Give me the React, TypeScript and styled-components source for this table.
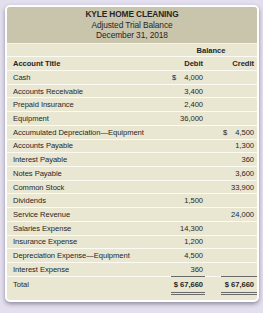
import styled, { createGlobalStyle } from "styled-components";

const GlobalStyle = createGlobalStyle`
  html, body {
    margin: 0;
    padding: 0;
    background: #e3dfee;
  }
  body {
    font-family: "Liberation Sans", Arial, sans-serif;
  }
`;

type Row = { title: string; debit?: string; credit?: string; dollar?: boolean };

const rows: Row[] = [
  { title: "Cash", debit: "4,000", dollar: true },
  { title: "Accounts Receivable", debit: "3,400" },
  { title: "Prepaid Insurance", debit: "2,400" },
  { title: "Equipment", debit: "36,000" },
  { title: "Accumulated Depreciation\u2014Equipment", credit: "4,500", dollar: true },
  { title: "Accounts Payable", credit: "1,300" },
  { title: "Interest Payable", credit: "360" },
  { title: "Notes Payable", credit: "3,600" },
  { title: "Common Stock", credit: "33,900" },
  { title: "Dividends", debit: "1,500" },
  { title: "Service Revenue", credit: "24,000" },
  { title: "Salaries Expense", debit: "14,300" },
  { title: "Insurance Expense", debit: "1,200" },
  { title: "Depreciation Expense\u2014Equipment", debit: "4,500" },
  { title: "Interest Expense", debit: "360" },
];

const Amount = ({ value, dollar }: { value?: string; dollar?: boolean }) => {
  if (!value) return null;
  if (!dollar) return <>{value}</>;
  return (
    <Dollar>
      <span>$</span>
      <span>{value}</span>
    </Dollar>
  );
};

const App = () => {
  return (
    <Page>
      <GlobalStyle />
      <Card>
        <Header>
          <Company>KYLE HOME CLEANING</Company>
          <SubTitle>Adjusted Trial Balance</SubTitle>
          <SubTitle>December 31, 2018</SubTitle>
        </Header>
        <Table>
          <BalanceRow>
            <span />
            <BalanceLabel>Balance</BalanceLabel>
          </BalanceRow>
          <HeadRow>
            <Cell>Account Title</Cell>
            <Num $head>Debit</Num>
            <Num $head $credit>Credit</Num>
          </HeadRow>
          {rows.map((r) => (
            <BodyRow key={r.title}>
              <Cell>{r.title}</Cell>
              <Num>{r.debit && <Amount value={r.debit} dollar={r.dollar} />}</Num>
              <Num $credit>
                {r.credit && <Amount value={r.credit} dollar={r.dollar} />}
              </Num>
            </BodyRow>
          ))}
          <TotalRow>
            <TotalCell>Total</TotalCell>
            <Num>
              <TotalAmount>$ 67,660</TotalAmount>
            </Num>
            <Num $credit>
              <TotalAmount $wide>$ 67,660</TotalAmount>
            </Num>
          </TotalRow>
          <Foot />
        </Table>
      </Card>
    </Page>
  );
};

export default App;

const Page = styled.div`
  width: 263px;
  height: 313px;
  box-sizing: border-box;
  padding: 5px 4px 0 5px;
`;

const Card = styled.div`
  width: 254px;
  border: 2.5px solid #ffffff;
  border-radius: 5px;
  box-sizing: border-box;
  background: #e9e6d1;
  box-shadow: 0 2px 4px rgba(60, 55, 80, 0.5);
  overflow: hidden;
`;

const Header = styled.div`
  background: #c9c4ac;
  height: 37px;
  display: flex;
  flex-direction: column;
  align-items: center;
  justify-content: center;
  color: #262626;
  border-bottom: 1px solid #f4f2e6;
  box-sizing: border-box;
`;

const Company = styled.div`
  font-size: 8.3px;
  font-weight: bold;
  line-height: 10.5px;
  letter-spacing: -0.1px;
`;

const SubTitle = styled.div`
  font-size: 8.4px;
  line-height: 10.5px;
  letter-spacing: -0.1px;
`;

const Table = styled.div`
  display: flex;
  flex-direction: column;
  color: #262626;
  font-size: 7.6px;
  letter-spacing: -0.05px;
`;

const Line = styled.div`
  display: grid;
  grid-template-columns: 1fr 42px 52px;
  align-items: center;
  box-sizing: border-box;
  border-bottom: 1px solid #fbfaf3;
`;

const BalanceRow = styled(Line)`
  grid-template-columns: 1fr 94px;
  height: 13px;
`;

const BalanceLabel = styled.div`
  text-align: center;
  font-weight: bold;
  padding-left: 2px;
`;

const HeadRow = styled(Line)`
  height: 14px;
  font-weight: bold;
`;

const BodyRow = styled(Line)`
  height: 13.73px;
`;

const TotalRow = styled(Line)`
  height: 16px;
  border-bottom: none;
  align-items: start;
`;

const Cell = styled.div`
  padding-left: 6px;
  white-space: nowrap;
`;

const TotalCell = styled(Cell)`
  padding-top: 3px;
`;

const Num = styled.div<{ $credit?: boolean; $head?: boolean }>`
  display: flex;
  justify-content: flex-end;
  white-space: pre;
  padding-right: ${(p) => (p.$credit ? "3px" : "2px")};
  font-weight: ${(p) => (p.$head ? "bold" : "normal")};
`;

const Dollar = styled.span`
  display: flex;
  justify-content: space-between;
  width: 31px;
`;

const TotalAmount = styled.span<{ $wide?: boolean }>`
  display: inline-block;
  box-sizing: border-box;
  width: ${(p) => (p.$wide ? "36px" : "34px")};
  margin-right: ${(p) => (p.$wide ? "-3px" : "-2px")};
  padding-right: ${(p) => (p.$wide ? "3px" : "2px")};
  padding-top: 3px;
  height: 19px;
  border-top: 1px solid #6a6a6a;
  border-bottom: 3px double #6a6a6a;
  font-weight: bold;
  text-align: right;
  margin-top: -1px;
`;

const Foot = styled.div`
  height: 7px;
`;
